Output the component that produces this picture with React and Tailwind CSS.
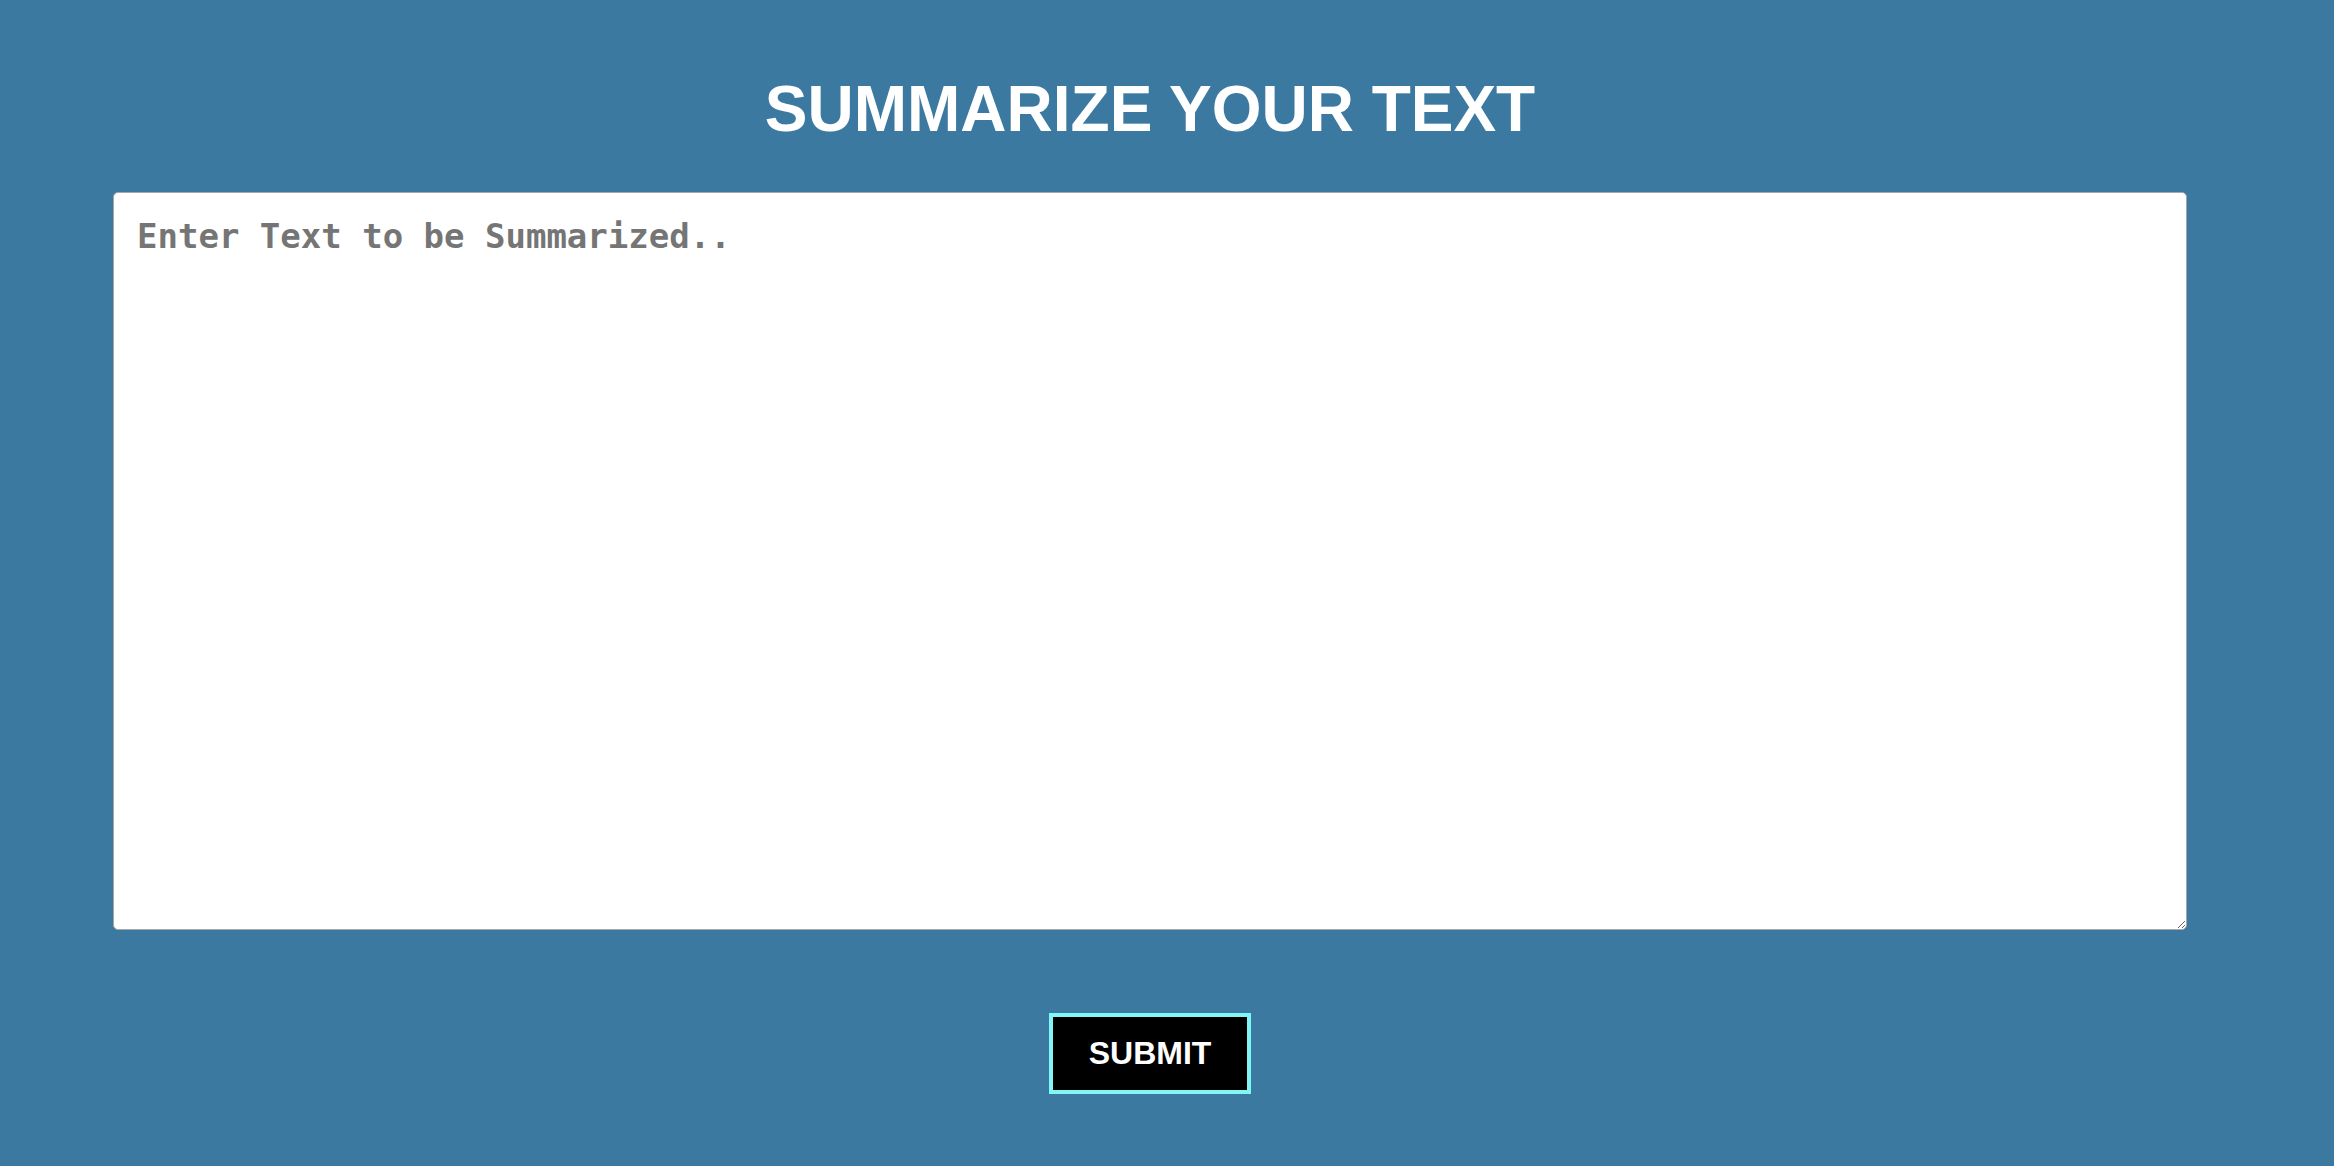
export default function App() {
  return (
    <div className="min-h-screen w-full bg-[#3c79a1]">
      {/* content column is centred a little left of the window */}
      <div className="ml-[113px] flex w-[2074px] flex-col items-center pt-[73px]">
        <h1 className="text-[64px] leading-[1.15] font-bold text-white font-['Liberation_Sans',Arial,sans-serif]">
          SUMMARIZE YOUR TEXT
        </h1>
        <textarea
          placeholder="Enter Text to be Summarized.."
          className="mt-[45px] h-[738px] w-full rounded-[5px] border border-[#a6a6a6] bg-white px-[23px] pt-[18px] pb-[23px] text-[34px] leading-normal font-bold text-[#333] placeholder:text-[#757575] outline-none font-['DejaVu_Sans_Mono',monospace]"
        />
        <button
          type="button"
          className="mt-[83px] h-[81px] w-[202px] border-4 border-[#82f6f4] bg-black text-[32px] font-bold text-white font-['Liberation_Sans',Arial,sans-serif]"
        >
          SUBMIT
        </button>
      </div>
    </div>
  );
}
